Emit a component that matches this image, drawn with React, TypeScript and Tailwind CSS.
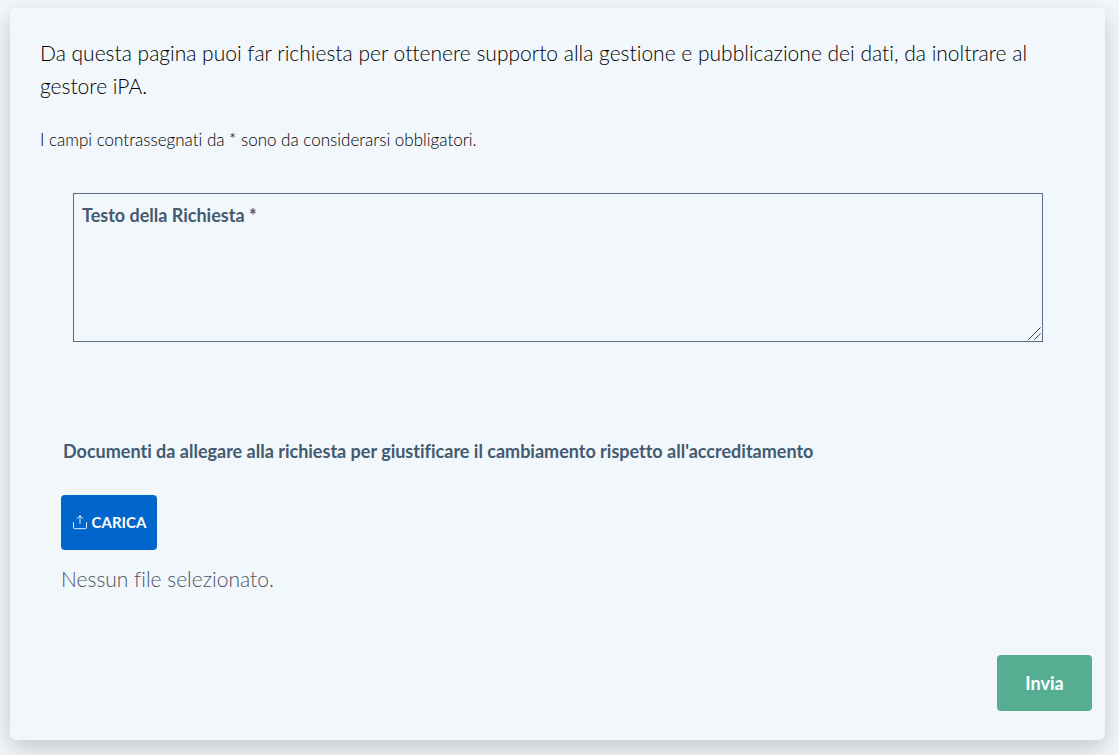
import React, { useRef, useState } from "react";

function UploadIcon() {
  return (
    <svg
      aria-hidden="true"
      viewBox="0 0 16 16"
      className="size-4 shrink-0"
      fill="none"
      stroke="currentColor"
      strokeWidth="0.9"
      strokeLinecap="round"
      strokeLinejoin="round"
    >
      <path d="M8 8.5V.8M5 3.6L8 .8l3 2.8M1.5 7.5v5.2a1 1 0 0 0 1 1h11a1 1 0 0 0 1-1V7.5" />
    </svg>
  );
}

function ResizeGrip() {
  return (
    <svg
      aria-hidden="true"
      viewBox="0 0 14 14"
      className="pointer-events-none absolute right-px bottom-px size-3.5"
      fill="none"
      stroke="#3c4248"
      strokeWidth="1"
    >
      <path d="M.5 12.5l12-12M6.5 12.5l6-6" />
    </svg>
  );
}

export default function App() {
  const fileInput = useRef<HTMLInputElement>(null);
  const [request, setRequest] = useState("");
  const [fileName, setFileName] = useState("");

  return (
    <div className="min-h-screen bg-[#f2f7fb] pt-2 pr-3.5 pb-4 pl-2.5 font-['Lato',sans-serif] text-black [font-variant-ligatures:none]">
      <main className="rounded-md bg-[#f2f7fb] pt-7 pr-[13px] pb-[29px] shadow-[0_8px_24px_rgba(0,0,0,0.2)]">
        <div className="pr-12 pl-[30px] font-light">
          <p className="text-[21px] leading-[33px]">
            Da questa pagina puoi far richiesta per ottenere supporto alla gestione e pubblicazione dei dati, da inoltrare al gestore iPA.
          </p>
          <p className="mt-6 text-[17px] leading-7">
            I campi contrassegnati da * sono da considerarsi obbligatori.
          </p>
        </div>

        <form onSubmit={(event) => event.preventDefault()}>
          <div className="relative mt-[39px] mr-[49px] ml-[63px]">
            <label
              htmlFor="request"
              className={`absolute top-2 left-[9px] text-lg leading-7 font-bold text-[#435a70] ${request ? "hidden" : ""}`}
            >
              Testo della Richiesta *
            </label>
            <textarea
              id="request"
              required
              value={request}
              onChange={(event) => setRequest(event.target.value)}
              className="block h-[149px] w-full resize-y border border-[#5c6f82] bg-transparent p-2 text-lg leading-7 [&::-webkit-resizer]:bg-transparent"
            />
            <ResizeGrip />
          </div>

          <div className="mt-[95px] pl-[51px]">
            <label htmlFor="documents" className="block pl-0.5 text-lg leading-7 font-bold text-[#435a70]">
              Documenti da allegare alla richiesta per giustificare il cambiamento rispetto all'accreditamento
            </label>
            <input
              ref={fileInput}
              id="documents"
              type="file"
              className="sr-only"
              onChange={(event) => setFileName(event.target.files?.[0]?.name ?? "")}
            />
            <button
              type="button"
              onClick={() => fileInput.current?.click()}
              className="mt-[30px] flex h-[55px] w-24 items-center justify-center gap-1 rounded bg-[#0066cc] text-[15px] font-bold text-white"
            >
              <UploadIcon />
              CARICA
            </button>
            <p className="mt-[13px] text-[21px] leading-8 font-light text-[#4a545e]">{fileName || "Nessun file selezionato."}</p>
          </div>

          <div className="mt-[60px] flex justify-end">
            <button type="submit" className="h-14 w-[95px] rounded bg-[#55ae92] text-lg font-bold text-white">
              Invia
            </button>
          </div>
        </form>
      </main>
    </div>
  );
}
